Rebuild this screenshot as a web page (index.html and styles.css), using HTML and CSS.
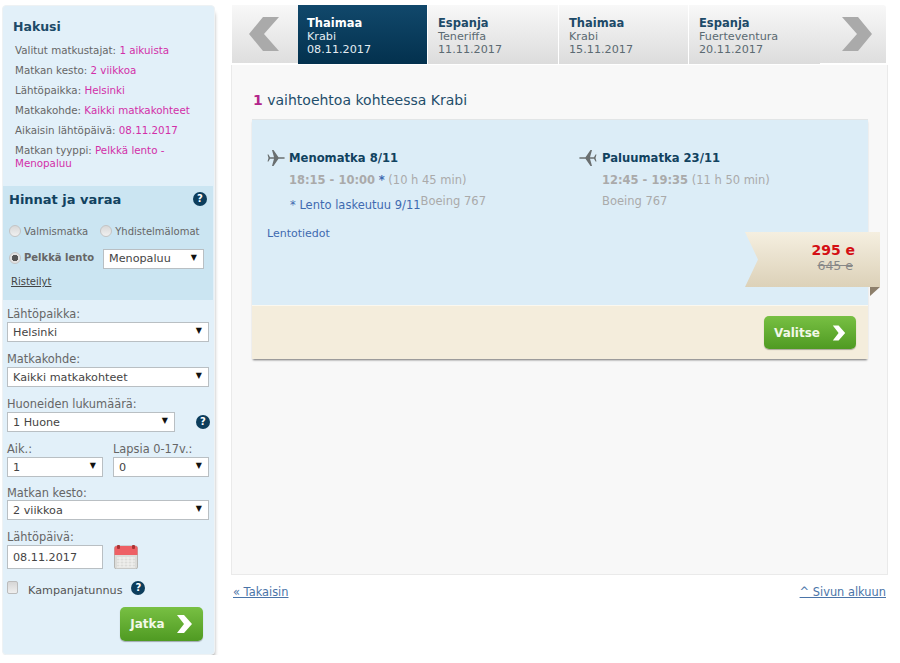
FILE: index.html
```html
<!DOCTYPE html>
<html lang="fi">
<head>
  <meta charset="UTF-8" />
  <title>Hinnat ja varaa</title>
  <link rel="stylesheet" href="styles.css">
</head>
<body>
  <div class="page">
    <aside class="sidebar">
      <div class="summary">
        <h3>Hakusi</h3>
        <p>Valitut matkustajat: <b>1 aikuista</b></p>
        <p>Matkan kesto: <b>2 viikkoa</b></p>
        <p>Lähtöpaikka: <b>Helsinki</b></p>
        <p>Matkakohde: <b>Kaikki matkakohteet</b></p>
        <p>Aikaisin lähtöpäivä: <b>08.11.2017</b></p>
        <p>Matkan tyyppi: <b>Pelkkä lento - Menopaluu</b></p>
      </div>

      <div class="prices">
        <div class="prices-head">
          <h3>Hinnat ja varaa</h3>
          <span class="help">?</span>
        </div>
        <div class="radio-row">
          <label class="radio"><input type="radio" name="tyyppi">Valmismatka</label>
          <label class="radio second"><input type="radio" name="tyyppi">Yhdistelmälomat</label>
        </div>
        <div class="radio-row flight">
          <label class="radio selected"><input type="radio" name="tyyppi" checked>Pelkkä lento</label>
          <div class="select small"><select><option>Menopaluu</option></select></div>
        </div>
        <a class="cruises" href="#">Risteilyt</a>
      </div>

      <form class="search">
        <label>Lähtöpaikka:</label>
        <div class="select"><select><option>Helsinki</option></select></div>
        <label>Matkakohde:</label>
        <div class="select"><select><option>Kaikki matkakohteet</option></select></div>
        <label>Huoneiden lukumäärä:</label>
        <div class="with-help">
          <div class="select rooms"><select><option>1 Huone</option></select></div>
          <span class="help">?</span>
        </div>
        <div class="pax">
          <div>
            <label>Aik.:</label>
            <div class="select"><select><option>1</option></select></div>
          </div>
          <div>
            <label>Lapsia 0-17v.:</label>
            <div class="select"><select><option>0</option></select></div>
          </div>
        </div>
        <label class="tight">Matkan kesto:</label>
        <div class="select"><select><option>2 viikkoa</option></select></div>
        <label class="tight date-label">Lähtöpäivä:</label>
        <div class="date-row">
          <input class="date" type="text" value="08.11.2017">
          <svg class="calendar" width="24" height="24" viewBox="0 0 24 24">
            <rect x="0.5" y="1" width="23" height="23" rx="2" fill="#dcdcd9" stroke="#b5b5b2"/>
            <path d="M0.5 3a2 2 0 0 1 2-2h19a2 2 0 0 1 2 2v7h-23z" fill="#ee6065"/>
            <rect x="3" y="0" width="3" height="4" rx="1" fill="#a33"/>
            <rect x="18" y="0" width="3" height="4" rx="1" fill="#a33"/>
            <path d="M3 13h18M3 16h18M3 19h18M3 22h18M6 12v10M10 12v10M14 12v10M18 12v10" stroke="#f3f3f1" stroke-width="1"/>
          </svg>
        </div>
        <div class="campaign">
          <input type="checkbox">
          <span>Kampanjatunnus</span>
          <span class="help">?</span>
        </div>
        <div class="submit">
          <a class="btn jatka" href="#">Jatka
            <svg width="17" height="18" viewBox="0 0 17 18"><path d="M1 0h7l8 9-8 9H1l7-9z" fill="#fff"/></svg>
          </a>
        </div>
      </form>
    </aside>

    <main class="content">
      <nav class="tabs">
        <a class="nav-arrow" href="#">
          <svg width="30" height="34" viewBox="0 0 30 34"><path d="M14 0h16L15 17l15 17H14L0 17z" fill="#aaa"/></svg>
        </a>
        <a class="tab active" href="#"><strong>Thaimaa</strong>Krabi<br>08.11.2017</a>
        <a class="tab" href="#"><strong>Espanja</strong>Teneriffa<br>11.11.2017</a>
        <a class="tab" href="#"><strong>Thaimaa</strong>Krabi<br>15.11.2017</a>
        <a class="tab" href="#"><strong>Espanja</strong>Fuerteventura<br>20.11.2017</a>
        <a class="nav-arrow next" href="#">
          <svg width="30" height="34" viewBox="0 0 30 34"><path d="M0 0h16l14 17-14 17H0l15-17z" fill="#aaa"/></svg>
        </a>
      </nav>

      <section class="panel">
        <h2><b>1</b> vaihtoehtoa kohteessa Krabi</h2>

        <div class="offer">
          <div class="offer-info">
            <div class="flights">
              <div class="flight-col">
                <h4>
                  <svg class="plane" width="18" height="18" viewBox="0 0 18 18"><path d="M0.500 5.500h1l1.500 2.700h4L5 1h1.500l5 7.200h4.500c1.200 0 2 .4 2 .8s-.8.8-2 .8h-4.500l-5 7.200H5l2-7.200H3L1.500 12.500h-1L1.500 9z" fill="#6a6f70"/></svg>
                  Menomatka 8/11
                </h4>
                <p class="times"><b>18:15 - 10:00</b> <i>*</i> (10 h 45 min)</p>
                <p class="note"><a href="#">* Lento laskeutuu 9/11</a><span>Boeing 767</span></p>
              </div>
              <div class="flight-col">
                <h4>
                  <svg class="plane back" width="18" height="18" viewBox="0 0 18 18"><path d="M0.500 5.500h1l1.500 2.700h4L5 1h1.500l5 7.200h4.500c1.200 0 2 .4 2 .8s-.8.8-2 .8h-4.500l-5 7.200H5l2-7.200H3L1.500 12.500h-1L1.500 9z" fill="#6a6f70"/></svg>
                  Paluumatka 23/11
                </h4>
                <p class="times"><b>12:45 - 19:35</b> (11 h 50 min)</p>
                <p class="plain">Boeing 767</p>
              </div>
            </div>
            <a class="details" href="#">Lentotiedot</a>
          </div>
          <div class="offer-foot">
            <a class="btn valitse" href="#">Valitse
              <svg width="14" height="16" viewBox="0 0 17 18"><path d="M1 0h7l8 9-8 9H1l7-9z" fill="#fff"/></svg>
            </a>
          </div>
          <div class="ribbon">
            <strong>295 e</strong>
            <s>645 e</s>
          </div>
          <span class="ribbon-fold"></span>
        </div>
      </section>

      <div class="bottom-links">
        <a href="#">« Takaisin</a>
        <a href="#">^ Sivun alkuun</a>
      </div>
    </main>
  </div>
</body>
</html>
```

FILE: styles.css
```css
* {
  box-sizing: border-box;
}
body {
  margin: 0;
  background: #fff;
  font-family: 'DejaVu Sans', Verdana, sans-serif;
  font-size: 11px;
  color: #555;
}
.page {
  display: flex;
  align-items: flex-start;
  padding: 5px 12px 0 2px;
  width: 900px;
}
h2, h3, h4, p {
  margin: 0;
}

/* sidebar */
.sidebar {
  width: 213px;
  height: 650px;
  background: #e2f0f9;
  border: 1px solid #eef2f4;
  border-radius: 4px;
  box-shadow: 2px 5px 4px -3px rgba(0, 0, 0, 0.45);
  flex-shrink: 0;
}
.summary {
  height: 180px;
  padding: 13px 8px 0 10px;
}
.summary h3 {
  font-size: 12.5px;
  line-height: 16px;
  color: #1d4a68;
  margin-bottom: 9px;
}
.summary p {
  font-size: 10.3px;
  line-height: 13px;
  margin: 0 0 7px 2px;
  color: #666;
}
.summary b {
  font-weight: normal;
  color: #d22fa8;
}
.prices {
  height: 114px;
  background: #cbe5f2;
  padding: 5px 6px 0 6px;
  margin-right: 1px;
}
.prices-head {
  display: flex;
  justify-content: space-between;
  align-items: center;
  height: 16px;
  margin-bottom: 16px;
}
.prices-head h3 {
  font-size: 13px;
  color: #11425f;
}
.help {
  width: 14px;
  height: 14px;
  border-radius: 50%;
  background: #0c3d5c;
  color: #fff;
  font-size: 10px;
  font-weight: bold;
  line-height: 14px;
  text-align: center;
  flex-shrink: 0;
}
.radio-row {
  display: flex;
  align-items: center;
  height: 16px;
  margin-bottom: 10px;
}
.radio-row.flight {
  height: 19px;
  margin-bottom: 7px;
}
.radio {
  display: flex;
  align-items: center;
  font-size: 10px;
  color: #666;
}
.radio.second {
  margin-left: 12px;
}
.radio.selected {
  font-weight: bold;
  width: 94px;
  margin-top: -2px;
}
.radio input {
  appearance: none;
  width: 12px;
  height: 12px;
  margin: 0 3px 0 0;
  border-radius: 50%;
  border: 1px solid #c4c4c4;
  background: linear-gradient(#d8d8d8, #f0f0f0);
  flex-shrink: 0;
}
.radio input:checked {
  background: radial-gradient(circle, #555 0, #555 3px, #e2e2e2 3.5px);
}
.cruises {
  display: block;
  margin: 8px 0 0 2px;
  font-size: 10px;
  color: #444;
}
.select {
  position: relative;
  height: 20px;
}
.select select {
  appearance: none;
  display: block;
  width: 100%;
  height: 100%;
  padding: 0 0 0 5px;
  border: 1px solid #b9bfc3;
  border-radius: 0;
  background: #fff;
  font-family: inherit;
  font-size: 11.2px;
  color: #444;
}
.select::after {
  content: "▼";
  position: absolute;
  right: 7px;
  top: 4px;
  font-size: 8px;
  color: #111;
  pointer-events: none;
}
.select.small {
  width: 101px;
}
.search {
  padding: 7px 5px 0 4px;
}
.search label {
  display: block;
  height: 15px;
  line-height: 14px;
  font-size: 11.4px;
  color: #666;
  margin-top: 10px;
}
.search > label:first-child {
  margin-top: 0;
}
.search label.tight {
  margin-top: 9px;
  height: 14px;
}
.search label.date-label {
  margin-top: 10px;
}
.with-help {
  display: flex;
  align-items: center;
  justify-content: space-between;
}
.select.rooms {
  width: 168px;
}
.with-help .help {
  margin-right: -1px;
}
.pax {
  display: flex;
  gap: 10px;
}
.pax > div {
  flex: 1;
}
.date-row {
  display: flex;
  align-items: center;
  gap: 11px;
  margin-top: 1px;
}
.date {
  width: 96px;
  height: 24px;
  padding: 0 5px;
  border: 1px solid #b9bfc3;
  background: #fff;
  font-family: inherit;
  font-size: 11.2px;
  color: #444;
}
.campaign {
  display: flex;
  align-items: center;
  height: 16px;
  margin-top: 13px;
  font-size: 11.2px;
  color: #555;
}
.campaign input {
  appearance: none;
  width: 11px;
  height: 13px;
  margin: -5px 10px 0 0;
  border: 1px solid #bbb;
  border-radius: 2px;
  background: linear-gradient(#d6d6d6, #efefef);
}
.campaign .help {
  margin: -4px 0 0 9px;
}
.submit {
  display: flex;
  justify-content: flex-end;
  margin-top: 9px;
  padding-right: 6px;
}
.btn {
  display: flex;
  align-items: center;
  justify-content: center;
  color: #f2f8e8;
  font-weight: bold;
  text-decoration: none;
  border-radius: 5px;
  background: linear-gradient(#78c043, #4f9a22);
  box-shadow: 0 1px 1px rgba(0, 0, 0, 0.3);
}
.jatka {
  width: 83px;
  height: 34px;
  gap: 11px;
  font-size: 12px;
}

/* main column */
.content {
  width: 657px;
  margin-left: 16px;
}
.tabs {
  display: flex;
  height: 60px;
  padding-left: 1px;
}
.nav-arrow {
  width: 66px;
  height: 58px;
  display: flex;
  align-items: center;
  justify-content: center;
  background: linear-gradient(#f8f8f8, #dedede);
  padding-right: 2px;
}
.nav-arrow.next {
  padding: 0 0 0 8px;
  border-radius: 0 3px 0 0;
}
.tab {
  width: 130px;
  height: 59px;
  padding: 12px 0 0 10px;
  margin-right: 1px;
  background: linear-gradient(#f8f8f8, #dcdcdc);
  font-size: 11.2px;
  line-height: 13px;
  color: #5b6a72;
  text-decoration: none;
}
.tab:nth-child(4) {
  width: 129px;
}
.tab:nth-child(5) {
  width: 131px;
  margin-right: 0;
}
.tab strong {
  display: block;
  font-size: 11.5px;
  color: #1d4a68;
}
.tab.active {
  width: 129px;
  padding-left: 9px;
  background: linear-gradient(#11486b, #03314e);
  color: #e4edf2;
}
.tab.active strong {
  color: #fff;
}
.panel {
  height: 510px;
  background: #f8f8f8;
  border: 1px solid #eaeaea;
  border-top: 0;
  padding: 27px 19px 0 20px;
}
.panel h2 {
  font-size: 14px;
  font-weight: normal;
  line-height: 17px;
  color: #1f4e6b;
  margin-left: 1px;
}
.panel h2 b {
  color: #b3268b;
}
.offer {
  position: relative;
  margin-top: 10px;
  width: 616px;
  box-shadow: 0 2px 2px -1px rgba(0, 0, 0, 0.55);
}
.offer-info {
  height: 186px;
  background: #dcedf7;
  border-top: 1px solid #e2e5e6;
  padding: 29px 15px 0 15px;
}
.flights {
  display: flex;
}
.flight-col {
  width: 312px;
  flex: none;
}
.flight-col + .flight-col h4 {
  gap: 5px;
}
.flight-col h4 {
  display: flex;
  align-items: center;
  gap: 4px;
  height: 18px;
  font-size: 11.6px;
  color: #11425f;
}
.plane.back {
  transform: scaleX(-1);
}
.times {
  margin: 6px 0 0 22px;
  font-size: 11.5px;
  line-height: 14px;
  color: #aaa;
}
.flight-col + .flight-col .times {
  margin-left: 23px;
}
.times i {
  font-style: normal;
  font-weight: bold;
  color: #3f6ab0;
}
.note {
  margin: 11px 0 0 23px;
  line-height: 14px;
  font-size: 11.5px;
}
.note a, .details {
  color: #3f6ab0;
  text-decoration: none;
}
.note span {
  position: relative;
  top: -4px;
  color: #aaa;
}
.plain {
  margin: 11px 0 0 23px;
  font-size: 11.5px;
  line-height: 14px;
  color: #aaa;
  position: relative;
  top: -4px;
}
.details {
  display: block;
  margin-top: 15px;
  line-height: 14px;
}
.offer-foot {
  height: 54px;
  background: #f4eddc;
  border-top: 1px solid #fbf8ef;
  display: flex;
  justify-content: flex-end;
  padding: 10px 12px 0 0;
}
.valitse {
  width: 92px;
  height: 33px;
  gap: 12px;
  font-size: 12px;
}
.ribbon {
  position: absolute;
  left: 493px;
  top: 113px;
  width: 135px;
  height: 55px;
  padding: 10px 25px 0 0;
  text-align: right;
  background: linear-gradient(#f5efe0, #dcd1b8);
  clip-path: polygon(0 0, 100% 0, 100% 100%, 0 100%, 13px 50%);
  line-height: 16px;
}
.ribbon strong {
  display: block;
  font-size: 14px;
  color: #d40f14;
}
.ribbon s {
  display: block;
  font-size: 12.5px;
  line-height: 15px;
  color: #888;
  padding-right: 2px;
}
.ribbon-fold {
  position: absolute;
  left: 618px;
  top: 168px;
  width: 10px;
  height: 9px;
  background: #8d7f6b;
  clip-path: polygon(0 0, 100% 0, 0 100%);
}
.bottom-links {
  display: flex;
  justify-content: space-between;
  padding: 10px 2px 0 2px;
  font-size: 11.4px;
  line-height: 15px;
}
.bottom-links a {
  color: #4a74a8;
}
```
